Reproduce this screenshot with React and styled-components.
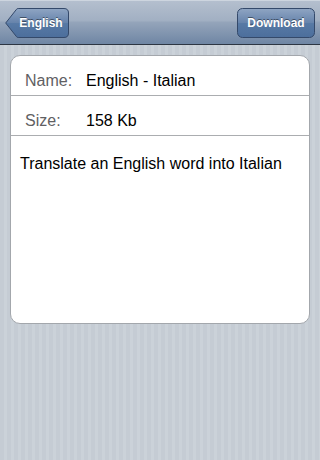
import React from "react";
import styled, { createGlobalStyle } from "styled-components";

const Global = createGlobalStyle`
  html, body { margin: 0; padding: 0; }
  body {
    width: 320px;
    height: 460px;
    overflow: hidden;
    font-family: "Liberation Sans", Arial, sans-serif;
  }
`;

const Screen = styled.div`
  width: 320px;
  height: 460px;
  display: flex;
  flex-direction: column;
  background-color: #c5ccd4;
  background-image: repeating-linear-gradient(
    90deg,
    #c5ccd4 0px,
    #c5ccd4 4px,
    #cbd2d9 4px,
    #cbd2d9 7px
  );
`;

const NavBar = styled.header`
  height: 43px;
  flex: 0 0 auto;
  display: flex;
  align-items: center;
  justify-content: space-between;
  padding: 0 5px;
  background: linear-gradient(
    to bottom,
    #b4bfce 0%,
    #a2b0c3 45%,
    #94a4ba 50%,
    #6f86a4 100%
  );
  border-top: 1px solid #cdd5df;
  border-bottom: 1px solid #2d3643;
`;

const ButtonShell = styled.button`
  position: relative;
  height: 30px;
  width: ${(p) => p.$w}px;
  padding: 0;
  margin: 0;
  border: none;
  background: none;
  display: flex;
  align-items: center;
  justify-content: center;
  cursor: pointer;
  color: #fff;
  font-family: "Liberation Sans", Arial, sans-serif;
  font-weight: bold;
  font-size: 12px;
  text-shadow: 0 -1px 0 rgba(0, 0, 0, 0.45);
`;

const ButtonShape = styled.svg`
  position: absolute;
  inset: 0;
`;

const ButtonLabel = styled.span`
  position: relative;
  padding-left: ${(p) => p.$offset || 0}px;
`;

const ButtonFill = ({ id }) => (
  <defs>
    <linearGradient id={id} x1="0" y1="0" x2="0" y2="1">
      <stop offset="0" stopColor="#8fa5c3" />
      <stop offset="0.5" stopColor="#6683ab" />
      <stop offset="0.5" stopColor="#587aa5" />
      <stop offset="1" stopColor="#4c6e9c" />
    </linearGradient>
  </defs>
);

const BackButton = ({ children }) => (
  <ButtonShell $w={64}>
    <ButtonShape width="64" height="30" viewBox="0 0 64 30">
      <ButtonFill id="backg" />
      <path
        d="M0.7 15 L11.5 1.3 Q12 0.5 13.2 0.5 L59 0.5 Q63.5 0.5 63.5 5 L63.5 25 Q63.5 29.5 59 29.5 L13.2 29.5 Q12 29.5 11.5 28.7 Z"
        fill="url(#backg)"
        stroke="#34496a"
        strokeWidth="1"
      />
    </ButtonShape>
    <ButtonLabel $offset={8}>{children}</ButtonLabel>
  </ButtonShell>
);

const ActionButton = ({ children }) => (
  <ButtonShell $w={78}>
    <ButtonShape width="78" height="30" viewBox="0 0 78 30">
      <ButtonFill id="actg" />
      <rect
        x="0.5"
        y="0.5"
        width="77"
        height="29"
        rx="5"
        fill="url(#actg)"
        stroke="#34496a"
        strokeWidth="1"
      />
    </ButtonShape>
    <ButtonLabel>{children}</ButtonLabel>
  </ButtonShell>
);

const Content = styled.main`
  flex: 1;
  padding: 10px 10px 0 10px;
`;

const Card = styled.section`
  height: 267px;
  background: #fff;
  border: 1px solid #a3a7ac;
  border-radius: 10px;
  overflow: hidden;
  display: flex;
  flex-direction: column;
`;

const Row = styled.div`
  height: 39px;
  box-sizing: content-box;
  display: flex;
  align-items: flex-start;
  padding-left: 14px;
  border-bottom: 1px solid #abadb0;
  font-size: 16px;
  line-height: 20px;
`;

const Label = styled.span`
  width: 61px;
  padding-top: 15px;
  color: #5f6063;
`;

const Value = styled.span`
  padding-top: 15px;
  color: #000;
`;

const Description = styled.p`
  margin: 0;
  padding: 19px 0 0 9px;
  font-size: 16px;
  line-height: 18px;
  color: #000;
`;

export default function App() {
  return (
    <>
      <Global />
      <Screen>
        <NavBar>
          <BackButton>English</BackButton>
          <ActionButton>Download</ActionButton>
        </NavBar>
        <Content>
          <Card>
            <Row>
              <Label>Name:</Label>
              <Value>English - Italian</Value>
            </Row>
            <Row>
              <Label>Size:</Label>
              <Value>158 Kb</Value>
            </Row>
            <Description>Translate an English word into Italian</Description>
          </Card>
        </Content>
      </Screen>
    </>
  );
}
